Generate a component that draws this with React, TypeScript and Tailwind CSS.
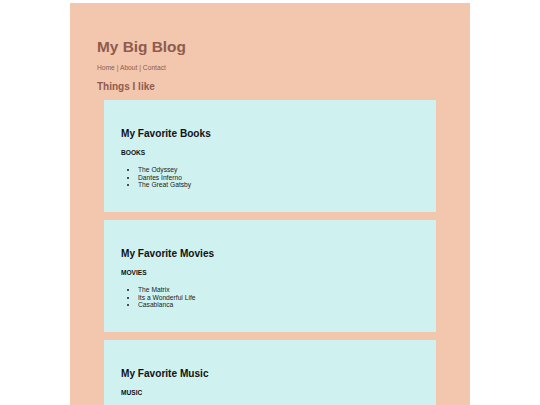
const sections = [
  {
    title: "My Favorite Books",
    label: "BOOKS",
    items: ["The Odyssey", "Dantes Inferno", "The Great Gatsby"],
  },
  {
    title: "My Favorite Movies",
    label: "MOVIES",
    items: ["The Matrix", "Its a Wonderful Life", "Casablanca"],
  },
  {
    title: "My Favorite Music",
    label: "MUSIC",
    items: ["Beethoven", "The Beatles", "Miles Davis"],
  },
];

const App = () => {
  return (
    <div className="min-h-[405px] bg-white pt-[3px] font-['Liberation_Sans',Arial,sans-serif]">
      <div className="mx-auto flex w-[400px] min-h-[402px] flex-col bg-[#f2c7ad] px-[27px] pt-[36px] pb-8">
        {/* Header */}
        <h1 className="text-[15.4px] leading-[16px] font-bold text-[#8e5b4f]">My Big Blog</h1>
        <nav className="mt-[9px] text-[6.7px] leading-[8px] text-[#8e5b4f]">Home | About | Contact</nav>
        <h2 className="mt-[9px] text-[10px] leading-[11px] font-bold text-[#8e5b4f]">Things I like</h2>

        {/* Cards */}
        <div className="mt-[8px] ml-[7px] flex w-[332px] flex-col gap-[8px]">
          {sections.map((s) => (
            <section key={s.label} className="h-[112px] bg-[#cff2f1] px-[17px] pt-[28px] text-[#111]">
              <h3 className="text-[10.1px] leading-[11px] font-bold">{s.title}</h3>
              <h4 className="mt-[10px] text-[6.6px] leading-[7px] font-bold">{s.label}</h4>
              <ul className="mt-[10px] list-disc pl-[17px] text-[6.7px] leading-[7.5px] text-[#1a1a1a]">
                {s.items.map((item) => (
                  <li key={item}>{item}</li>
                ))}
              </ul>
            </section>
          ))}
        </div>
      </div>
    </div>
  );
};

export default App;
